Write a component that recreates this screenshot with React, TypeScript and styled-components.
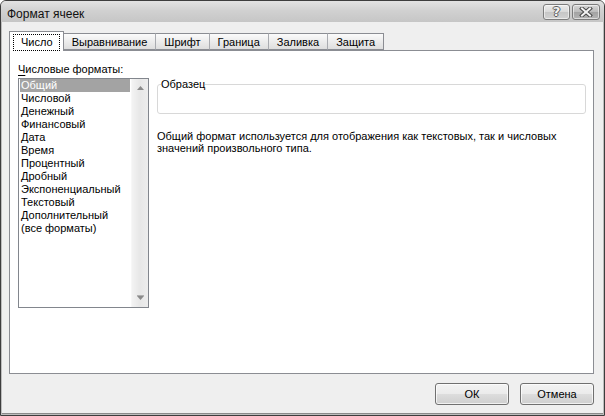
import styled, { createGlobalStyle } from 'styled-components';

const GlobalStyle = createGlobalStyle`
  html, body {
    margin: 0;
    padding: 0;
    background: #ffffff;
  }

  * {
    box-sizing: border-box;
  }
`;

const formats = [
  'Общий',
  'Числовой',
  'Денежный',
  'Финансовый',
  'Дата',
  'Время',
  'Процентный',
  'Дробный',
  'Экспоненциальный',
  'Текстовый',
  'Дополнительный',
  '(все форматы)',
];

const tabs = ['Число', 'Выравнивание', 'Шрифт', 'Граница', 'Заливка', 'Защита'];

const Window = styled.div`
  width: 605px;
  height: 416px;
  display: flex;
  flex-direction: column;
  border: 1px solid #3d3d3d;
  border-radius: 6px 6px 0 0;
  overflow: hidden;
  background: #efefef;
  box-shadow: inset 0 0 0 1px #bdbdbd, inset 0 -2px 0 0 #8a8a8a;
  font-family: 'Liberation Sans', Arial, sans-serif;
  font-size: 11px;
  color: #000;
`;

const TitleBar = styled.div`
  height: 21px;
  flex-shrink: 0;
  display: flex;
  align-items: flex-start;
  padding: 3px 4px 0 6px;
  background: linear-gradient(to bottom, #e2e2e2 0%, #d1d1d1 45%, #c6c6c6 100%);
`;

const TitleText = styled.span`
  font-size: 12px;
  line-height: 14px;
  margin-top: 3px;
  color: #111;
`;

const CaptionButtons = styled.div`
  margin-left: auto;
  display: flex;
  gap: 2px;
`;

const CaptionButton = styled.div<{ $close?: boolean }>`
  width: ${p => (p.$close ? 28 : 27)}px;
  height: 16px;
  display: flex;
  align-items: center;
  justify-content: center;
  border: 1px solid #7c7c7c;
  border-radius: 3px;
  background: ${p =>
    p.$close
      ? 'linear-gradient(to bottom, #d6d6d6 0%, #bcbcbc 50%, #a3a3a3 51%, #b4b4b4 100%)'
      : 'linear-gradient(to bottom, #ececec 0%, #d9d9d9 50%, #c6c6c6 51%, #d2d2d2 100%)'};
  box-shadow: inset 0 0 0 1px rgba(255, 255, 255, 0.55);
`;

const HelpGlyph = styled.span`
  font-family: 'DejaVu Sans', sans-serif;
  font-weight: bold;
  font-size: 13px;
  line-height: 14px;
  color: #f2f2f2;
  text-shadow: 1px 0 0 #5c5c5c, -1px 0 0 #5c5c5c, 0 1px 0 #5c5c5c, 0 -1px 0 #5c5c5c;
`;

const Body = styled.div`
  flex: 1;
  display: flex;
  flex-direction: column;
  padding: 9px 10px 0 8px;
`;

const TabStrip = styled.div`
  height: 20px;
  display: flex;
  align-items: flex-start;
  padding-left: 1px;
  position: relative;
  z-index: 1;
`;

const Tab = styled.div<{ $active?: boolean }>`
  height: ${p => (p.$active ? 20 : 17)}px;
  margin-top: ${p => (p.$active ? 0 : 2)}px;
  padding: ${p => (p.$active ? '2px 3px 0' : '0 8px')};
  display: flex;
  align-items: ${p => (p.$active ? 'flex-start' : 'center')};
  border: 1px solid #8b8d93;
  border-bottom: ${p => (p.$active ? 'none' : '1px solid #8b8d93')};
  border-left-color: ${p => (p.$active ? '#8b8d93' : '#a9abb0')};
  margin-left: -1px;
  background: ${p =>
    p.$active ? '#ffffff' : 'linear-gradient(to bottom, #fbfbfb 0%, #ececec 50%, #dedede 100%)'};
  position: relative;
  z-index: ${p => (p.$active ? 2 : 1)};
  white-space: nowrap;
`;

const FocusLabel = styled.span`
  display: block;
  height: 17px;
  line-height: 15px;
  padding: 0 6px 0 7px;
  border: 1px dotted #000;
`;

const Panel = styled.div`
  height: 324px;
  margin-top: -1px;
  border: 1px solid #8b8d93;
  background: #ffffff;
  padding: 12px 7px 0 8px;
  display: grid;
  grid-template-columns: 131px 1fr;
  grid-template-rows: 13px auto;
  column-gap: 8px;
  row-gap: 2px;
  align-content: start;
`;

const FieldLabel = styled.div`
  grid-column: 1 / 3;
  line-height: 13px;
`;

const Accel = styled.span`
  text-decoration: underline;
  text-underline-offset: 2px;
`;

const ListBox = styled.div`
  height: 230px;
  display: flex;
  border: 1px solid #82868d;
  background: #ffffff;
`;

const ListItems = styled.div`
  flex: 1;
  padding: 0 1px;
`;

const ListItem = styled.div<{ $selected?: boolean }>`
  height: 13px;
  line-height: 13px;
  padding-left: 1px;
  white-space: nowrap;
  background: ${p => (p.$selected ? '#a3a3a3' : 'transparent')};
  color: ${p => (p.$selected ? '#ffffff' : '#000000')};
`;

const ScrollBar = styled.div`
  width: 17px;
  display: flex;
  flex-direction: column;
  justify-content: space-between;
  align-items: center;
  padding: 7px 0 7px;
  background: linear-gradient(to right, #f3f3f3 0%, #e7e7e7 50%, #ededed 100%);
  border-left: 1px solid #f7f7f7;
`;

const Arrow = styled.svg`
  display: block;
`;

const RightColumn = styled.div`
  display: flex;
  flex-direction: column;
`;

const SampleBox = styled.fieldset`
  margin: 0;
  padding: 0 0 0 3px;
  height: 36px;
  border: 1px solid #d8d8d8;
  border-radius: 3px;
`;

const SampleLegend = styled.legend`
  padding: 0;
  line-height: 13px;
`;

const Description = styled.p`
  margin: 16px 0 0;
  line-height: 12px;
`;

const ButtonRow = styled.div`
  display: flex;
  justify-content: flex-end;
  gap: 11px;
  margin-top: 9px;
`;

const DialogButton = styled.button`
  width: 74px;
  height: 22px;
  padding: 0;
  font-family: inherit;
  font-size: 11px;
  color: #000;
  border: 1px solid #707070;
  border-radius: 3px;
  background: linear-gradient(to bottom, #f3f3f3 0%, #ebebeb 49%, #dddddd 50%, #cfcfcf 100%);
  box-shadow: inset 0 0 0 1px rgba(255, 255, 255, 0.7);
`;

const CloseIcon = () => (
  <svg width="14" height="10" viewBox="0 0 14 10">
    <path d="M3 1.5 L11 8.5 M11 1.5 L3 8.5" stroke="#4a4a4a" strokeWidth="4" strokeLinecap="square" />
    <path d="M3 1.5 L11 8.5 M11 1.5 L3 8.5" stroke="#f4f4f4" strokeWidth="2" strokeLinecap="square" />
  </svg>
);

export default function App() {
  return (
    <>
      <GlobalStyle />
      <Window>
        <TitleBar>
          <TitleText>Формат ячеек</TitleText>
          <CaptionButtons>
            <CaptionButton>
              <HelpGlyph>?</HelpGlyph>
            </CaptionButton>
            <CaptionButton $close>
              <CloseIcon />
            </CaptionButton>
          </CaptionButtons>
        </TitleBar>

        <Body>
          <TabStrip>
            {tabs.map((name, i) => (
              <Tab key={name} $active={i === 0}>
                {i === 0 ? <FocusLabel>{name}</FocusLabel> : name}
              </Tab>
            ))}
          </TabStrip>

          <Panel>
            <FieldLabel>
              <Accel>Ч</Accel>исловые форматы:
            </FieldLabel>

            <ListBox>
              <ListItems>
                {formats.map((f, i) => (
                  <ListItem key={f} $selected={i === 0}>{f}</ListItem>
                ))}
              </ListItems>
              <ScrollBar>
                <Arrow width="7" height="4" viewBox="0 0 7 4">
                  <path d="M3.5 0 L7 4 L0 4 Z" fill="#8a8a8a" />
                </Arrow>
                <Arrow width="7" height="5" viewBox="0 0 7 5">
                  <rect x="0" y="0" width="7" height="1" fill="#b0b0b0" />
                  <path d="M0 1 L7 1 L3.5 5 Z" fill="#8a8a8a" />
                </Arrow>
              </ScrollBar>
            </ListBox>

            <RightColumn>
              <SampleBox>
                <SampleLegend>Образец</SampleLegend>
              </SampleBox>
              <Description>
                Общий формат используется для отображения как текстовых, так и числовых
                <br />
                значений произвольного типа.
              </Description>
            </RightColumn>
          </Panel>

          <ButtonRow>
            <DialogButton>ОК</DialogButton>
            <DialogButton>Отмена</DialogButton>
          </ButtonRow>
        </Body>
      </Window>
    </>
  );
}
